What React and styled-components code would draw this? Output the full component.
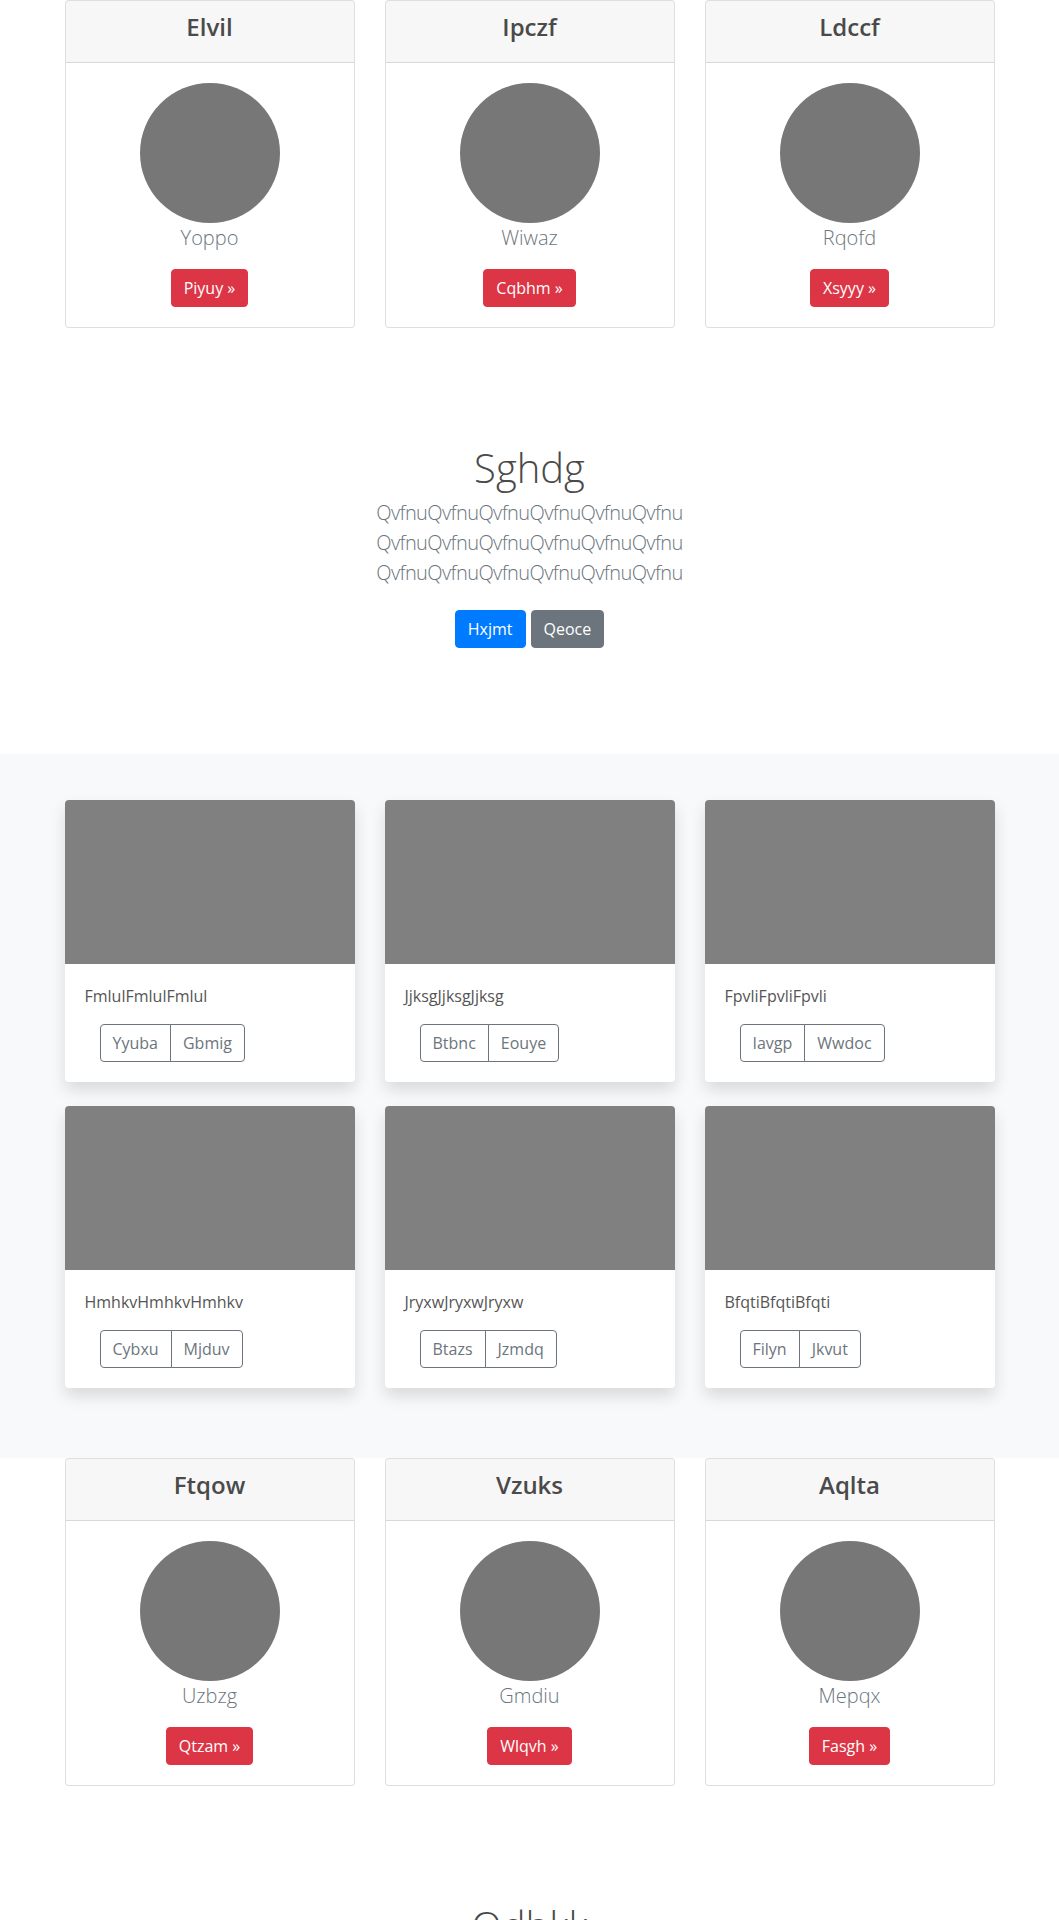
import React from 'react';
import styled, { createGlobalStyle } from 'styled-components';

const GlobalStyle = createGlobalStyle`
  * {
    box-sizing: border-box;
  }
  body {
    margin: 0;
    font-family: "Segoe UI", "Open Sans", "Liberation Sans", sans-serif;
    font-size: 16px;
    line-height: 1.5;
    color: #4a4a4a;
    background: #fff;
  }
`;

const Container = styled.div`
  max-width: 960px;
  margin: 0 auto;
  padding: 0 15px;
`;

const NarrowContainer = styled(Container)`
  max-width: 640px;
`;

const CardGrid = styled.div`
  display: grid;
  grid-template-columns: repeat(3, 1fr);
  column-gap: 30px;
  row-gap: ${({ $rowGap }) => $rowGap || 0}px;
`;

const PricingSection = styled.section`
  margin-bottom: 44px;
`;

const PricingCard = styled.div`
  display: flex;
  flex-direction: column;
  background: #fff;
  border: 1px solid rgba(0, 0, 0, 0.125);
  border-radius: 4px;
  text-align: center;
`;

const CardHeader = styled.div`
  padding: 12px 20px;
  background: rgba(0, 0, 0, 0.03);
  border-bottom: 1px solid rgba(0, 0, 0, 0.125);
  border-radius: 3px 3px 0 0;

  h4 {
    margin: 0 0 8px;
    font-size: 24px;
    font-weight: 600;
    line-height: 1.2;
    color: #4a4a4a;
  }
`;

const PricingBody = styled.div`
  padding: 20px;
`;

const Avatar = styled.svg`
  display: block;
  margin: 0 auto;
  width: 140px;
  height: 140px;
`;

const Lead = styled.p`
  margin: 0 0 16px;
  font-size: 20px;
  font-weight: 300;
  line-height: 1.5;
  color: #6c757d;
  letter-spacing: ${({ $tight }) => ($tight ? '-0.6px' : 'normal')};
`;

const Button = styled.button`
  display: inline-block;
  padding: 6px 12px;
  font-family: inherit;
  font-size: 16px;
  line-height: 24px;
  border: 1px solid ${({ $bg }) => $bg};
  border-radius: 4px;
  background: ${({ $bg }) => $bg};
  color: #fff;
  cursor: pointer;
`;

const Jumbotron = styled.section`
  padding: 72px 0 64px;
  margin-bottom: 32px;
  text-align: center;

  h1 {
    margin: 0 0 6px;
    font-size: 40px;
    font-weight: 300;
    line-height: 1.2;
    color: #4a4a4a;
  }
`;

const Actions = styled.div`
  display: flex;
  justify-content: center;
  gap: 5px;
  margin: 22px 0 10px;
`;

const AlbumSection = styled.section`
  background: #f8f9fa;
  padding: 46px 0 70px;
`;

const AlbumCard = styled.div`
  background: #fff;
  border-radius: 4px;
  overflow: hidden;
  box-shadow: 0 8px 16px rgba(0, 0, 0, 0.13);
`;

const Thumb = styled.div`
  height: 164px;
  background: #808080;
`;

const AlbumBody = styled.div`
  padding: 20px;

  p {
    margin: 0 0 16px;
    color: #555;
  }
`;

const BtnGroup = styled.div`
  display: inline-flex;
  margin-left: 15px;
`;

const OutlineBtn = styled.button`
  padding: 6px 12px;
  font-family: inherit;
  font-size: 16px;
  line-height: 24px;
  color: #6c757d;
  background: transparent;
  border: 1px solid #6c757d;
  cursor: pointer;

  &:first-child {
    border-radius: 4px 0 0 4px;
  }
  &:last-child {
    margin-left: -1px;
    border-radius: 0 4px 4px 0;
  }
`;

const topPlans = [
  { title: 'Elvil', name: 'Yoppo', action: 'Piyuy' },
  { title: 'Ipczf', name: 'Wiwaz', action: 'Cqbhm' },
  { title: 'Ldccf', name: 'Rqofd', action: 'Xsyyy' },
];

const bottomPlans = [
  { title: 'Ftqow', name: 'Uzbzg', action: 'Qtzam' },
  { title: 'Vzuks', name: 'Gmdiu', action: 'Wlqvh' },
  { title: 'Aqlta', name: 'Mepqx', action: 'Fasgh' },
];

const albums = [
  { text: 'FmlulFmlulFmlul', buttons: ['Yyuba', 'Gbmig'] },
  { text: 'JjksgJjksgJjksg', buttons: ['Btbnc', 'Eouye'] },
  { text: 'FpvliFpvliFpvli', buttons: ['Iavgp', 'Wwdoc'] },
  { text: 'HmhkvHmhkvHmhkv', buttons: ['Cybxu', 'Mjduv'] },
  { text: 'JryxwJryxwJryxw', buttons: ['Btazs', 'Jzmdq'] },
  { text: 'BfqtiBfqtiBfqti', buttons: ['Filyn', 'Jkvut'] },
];

const Pricing = ({ plans }) => (
  <PricingSection>
    <Container>
      <CardGrid>
        {plans.map((p) => (
          <PricingCard key={p.title}>
            <CardHeader>
              <h4>{p.title}</h4>
            </CardHeader>
            <PricingBody>
              <Avatar viewBox="0 0 140 140">
                <circle cx="70" cy="70" r="70" fill="#777" />
              </Avatar>
              <Lead>{p.name}</Lead>
              <Button $bg="#dc3545">{p.action} &raquo;</Button>
            </PricingBody>
          </PricingCard>
        ))}
      </CardGrid>
    </Container>
  </PricingSection>
);

const Hero = ({ title, word, primary, secondary }) => (
  <Jumbotron>
    <NarrowContainer>
      <h1>{title}</h1>
      <Lead $tight>
        {word.repeat(6)}
        <br />
        {word.repeat(6)}
        <br />
        {word.repeat(6)}
      </Lead>
      <Actions>
        <Button $bg="#007bff">{primary}</Button>
        <Button $bg="#6c757d">{secondary}</Button>
      </Actions>
    </NarrowContainer>
  </Jumbotron>
);

const App = () => (
  <>
    <GlobalStyle />
    <Pricing plans={topPlans} />
    <Hero title="Sghdg" word="Qvfnu" primary="Hxjmt" secondary="Qeoce" />
    <AlbumSection>
      <Container>
        <CardGrid $rowGap={24}>
          {albums.map((a) => (
            <AlbumCard key={a.text}>
              <Thumb />
              <AlbumBody>
                <p>{a.text}</p>
                <BtnGroup>
                  {a.buttons.map((b) => (
                    <OutlineBtn key={b}>{b}</OutlineBtn>
                  ))}
                </BtnGroup>
              </AlbumBody>
            </AlbumCard>
          ))}
        </CardGrid>
      </Container>
    </AlbumSection>
    <Pricing plans={bottomPlans} />
    <Hero title="Qdhkk" word="Lwmrk" primary="Vbnqe" secondary="Tzpox" />
  </>
);

export default App;
